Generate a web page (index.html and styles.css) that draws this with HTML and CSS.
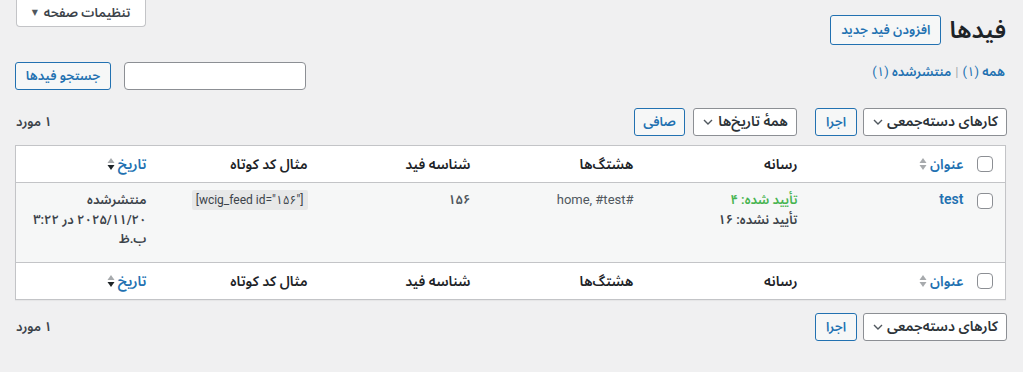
FILE: index.html
```html
<!DOCTYPE html>
<html lang="fa" dir="rtl">
<head>
<meta charset="utf-8">
<title>فیدها</title>
<link rel="stylesheet" href="styles.css">
</head>
<body>
<div class="screen-meta">
  <button class="screen-opts" type="button"><span class="so-text">تنظیمات صفحه</span><span class="tri">▼</span></button>
</div>
<div class="wrap">
  <div class="head">
    <h1 class="title">فیدها</h1>
    <a class="btn btn-lg" href="#">افزودن فید جدید</a>
  </div>

  <div class="filter-row">
    <ul class="subsubsub">
      <li><a href="#" class="current">همه <span class="count">(۱)</span></a> <span class="sep">|</span></li>
      <li><a href="#">منتشرشده <span class="count">(۱)</span></a></li>
    </ul>
    <div class="search-box">
      <input class="search-input" type="search" value="">
      <button class="btn" type="button">جستجو فیدها</button>
    </div>
  </div>

  <div class="tablenav">
    <div class="actions">
      <span class="select select-bulk">کارهای دسته‌جمعی <svg class="chev" viewBox="0 0 10 6" width="10" height="6"><path d="M1 1l4 4 4-4" fill="none" stroke="#50575e" stroke-width="1.4"/></svg></span>
      <button class="btn" type="button">اجرا</button>
    </div>
    <div class="actions">
      <span class="select select-date">همهٔ تاریخ‌ها <svg class="chev" viewBox="0 0 10 6" width="10" height="6"><path d="M1 1l4 4 4-4" fill="none" stroke="#50575e" stroke-width="1.4"/></svg></span>
      <button class="btn" type="button">صافی</button>
    </div>
    <div class="num-items">۱ مورد</div>
  </div>

  <table class="list">
    <thead>
      <tr>
        <td class="col-cb"><span class="cb"></span></td>
        <th class="col-title"><a href="#" class="sort">عنوان <svg class="sorter" viewBox="0 0 8 14" width="8" height="14"><path d="M4 1l3.5 5h-7z" fill="#a7aaad"/><path d="M4 13l3.5-5h-7z" fill="#a7aaad"/></svg></a></th>
        <th class="col-media">رسانه</th>
        <th class="col-tags">هشتگ‌ها</th>
        <th class="col-id">شناسه فید</th>
        <th class="col-code">مثال کد کوتاه</th>
        <th class="col-date"><a href="#" class="sort">تاریخ <svg class="sorter" viewBox="0 0 8 14" width="8" height="14"><path d="M4 1l3.5 5h-7z" fill="#a7aaad"/><path d="M4 13l3.5-5h-7z" fill="#1d2327"/></svg></a></th>
      </tr>
    </thead>
    <tbody>
      <tr class="alt">
        <td class="col-cb"><span class="cb"></span></td>
        <td class="col-title"><a href="#" class="row-title">test</a></td>
        <td class="col-media"><div class="ok">تأیید شده: ۴</div><div>تأیید نشده: ۱۶</div></td>
        <td class="col-tags">#home, #test</td>
        <td class="col-id">۱۵۶</td>
        <td class="col-code"><code>[wcig_feed id="۱۵۶"]</code></td>
        <td class="col-date">منتشرشده<br>۲۰۲۵/۱۱/۲۰ در ۳:۲۲ ب.ظ</td>
      </tr>
    </tbody>
    <tfoot>
      <tr>
        <td class="col-cb"><span class="cb"></span></td>
        <th class="col-title"><a href="#" class="sort">عنوان <svg class="sorter" viewBox="0 0 8 14" width="8" height="14"><path d="M4 1l3.5 5h-7z" fill="#a7aaad"/><path d="M4 13l3.5-5h-7z" fill="#a7aaad"/></svg></a></th>
        <th class="col-media">رسانه</th>
        <th class="col-tags">هشتگ‌ها</th>
        <th class="col-id">شناسه فید</th>
        <th class="col-code">مثال کد کوتاه</th>
        <th class="col-date"><a href="#" class="sort">تاریخ <svg class="sorter" viewBox="0 0 8 14" width="8" height="14"><path d="M4 1l3.5 5h-7z" fill="#a7aaad"/><path d="M4 13l3.5-5h-7z" fill="#1d2327"/></svg></a></th>
      </tr>
    </tfoot>
  </table>

  <div class="tablenav bottom">
    <div class="actions">
      <span class="select select-bulk">کارهای دسته‌جمعی <svg class="chev" viewBox="0 0 10 6" width="10" height="6"><path d="M1 1l4 4 4-4" fill="none" stroke="#50575e" stroke-width="1.4"/></svg></span>
      <button class="btn" type="button">اجرا</button>
    </div>
    <div class="num-items">۱ مورد</div>
  </div>
</div>
</body>
</html>
```
FILE: styles.css
```css
* { box-sizing: border-box; }
html, body { margin: 0; padding: 0; }
body {
  background: #f0f0f1;
  color: #3c434a;
  font-family: Roboto, "Noto Sans Arabic", "Vazirmatn", "DejaVu Sans", sans-serif;
  font-size: 13px;
  line-height: 1.4;
  width: 1023px;
  height: 372px;
  overflow: hidden;
}
a { color: #2271b1; text-decoration: none; }

.screen-meta { float: left; margin-left: 16px; }
.screen-opts {
  font: inherit;
  font-size: 13px;
  font-weight: 600;
  color: #3c434a;
  background: #fff;
  border: 1px solid #c3c4c7;
  border-top: none;
  border-radius: 0 0 4px 4px;
  width: 130px;
  height: 27px;
  padding: 0 4px;
  display: flex;
  align-items: center;
  justify-content: center;
  gap: 6px;
  white-space: nowrap;
}
.so-text { white-space: nowrap; }
.tri { font-size: 8px; color: #50575e; }

.wrap { padding: 0 17px 0 15px; }

.head {
  display: flex;
  align-items: center;
  gap: 8px;
  padding-top: 15px;
  height: 45px;
}
.title {
  margin: 0;
  font-size: 24px;
  font-weight: 600;
  color: #1d2327;
  line-height: 30px;
}

.btn {
  display: inline-flex;
  align-items: center;
  justify-content: center;
  height: 28px;
  padding: 0 9px;
  font: inherit;
  font-size: 13px;
  font-weight: 600;
  color: #2271b1;
  background: #f6f7f7;
  border: 1px solid #2271b1;
  border-radius: 3px;
  white-space: nowrap;
}
.btn-lg { height: 30px; padding: 0 10px; }

.filter-row {
  display: flex;
  justify-content: space-between;
  align-items: flex-start;
  margin-top: 17px;
}
.subsubsub {
  list-style: none;
  margin: 0;
  padding: 0;
  display: flex;
  gap: 4px;
  line-height: 20px;
  padding-right: 1px;
  font-weight: 600;
}
.subsubsub li { display: flex; gap: 4px; }
.subsubsub a { color: #2271b1; }
.count { font-weight: 400; }
.subsubsub .count { color: #2271b1; }
.sep { color: #a7aaad; font-weight: 400; }

.search-box { display: flex; gap: 13px; }
.search-input {
  width: 182px;
  height: 28px;
  border: 1px solid #8c8f94;
  border-radius: 4px;
  background: #fff;
  margin: 0;
}
.search-box .btn { width: 96px; }

.tablenav {
  display: flex;
  align-items: center;
  height: 28px;
  margin: 18px 0 9px;
  gap: 18px;
}
.tablenav.bottom { margin-top: 13px; }
.actions { display: flex; gap: 8px; align-items: center; }
.tablenav .actions:first-child { gap: 6px; margin-right: -1px; }
.select {
  display: inline-flex;
  align-items: center;
  justify-content: space-between;
  height: 28px;
  padding: 0 8px 0 9px;
  background: #fff;
  border: 1px solid #8c8f94;
  border-radius: 3px;
  color: #2c3338;
  font-size: 14px;
  font-weight: 600;
  white-space: nowrap;
}
.select-bulk { width: 144px; }
.select-date { width: 104px; }
.tablenav .btn { width: 42px; }
.tablenav .actions + .actions .btn { width: 51px; }
.chev { flex: none; }
.num-items {
  margin-right: auto;
  color: #3c434a;
  font-weight: 600;
  padding-left: 1px;
}

.list {
  width: 991px;
  border-collapse: collapse;
  border-spacing: 0;
  table-layout: fixed;
  background: #fff;
  border: 1px solid #c3c4c7;
  box-shadow: 0 1px 1px rgba(0,0,0,.04);
}
.list th, .list td {
  text-align: right;
  padding: 0 10px;
  vertical-align: middle;
}
.list thead tr, .list tfoot tr { height: 37px; }
.list thead tr { border-bottom: 1px solid #c3c4c7; }
.list tfoot tr { border-top: 1px solid #c3c4c7; }
.list th {
  font-size: 14px;
  font-weight: 600;
  color: #1d2327;
  line-height: 20px;
}
.col-cb { width: 32px; padding: 0 !important; }
.col-title { width: 166px; }
.col-media { width: 164px; }
.col-tags { width: 163px; }
.col-id { width: 163px; }
.col-code { width: 161px; }

.cb {
  display: block;
  width: 16px;
  height: 16px;
  margin-right: 12px;
  border: 1px solid #8c8f94;
  border-radius: 4px;
  background: #fff;
}
.sort { display: inline-flex; align-items: center; gap: 3px; color: #2271b1; }
.sorter { flex: none; }

.list tbody tr { height: 80px; background: #f6f7f7; }
.list tbody td {
  vertical-align: top;
  padding-top: 7px;
  line-height: 19.5px;
  color: #50575e;
  font-size: 13px;
}
.list tbody td.col-cb { vertical-align: top; padding-top: 10px !important; }
.list tbody td.col-media, .list tbody td.col-date { color: #3c434a; font-weight: 600; }
.row-title { font-size: 14px; font-weight: 600; color: #2271b1; }
.ok { color: #46b450; }
.list tbody td.col-id { font-weight: 600; }
code {
  direction: ltr;
  unicode-bidi: embed;
  display: inline-block;
  font-family: Roboto, "Noto Sans Arabic", "DejaVu Sans", sans-serif;
  font-size: 12px;
  line-height: 17px;
  padding: 2px 4px 1px;
  background: rgba(0,0,0,.06);
  color: #3c434a;
  border-radius: 2px;
}
```
